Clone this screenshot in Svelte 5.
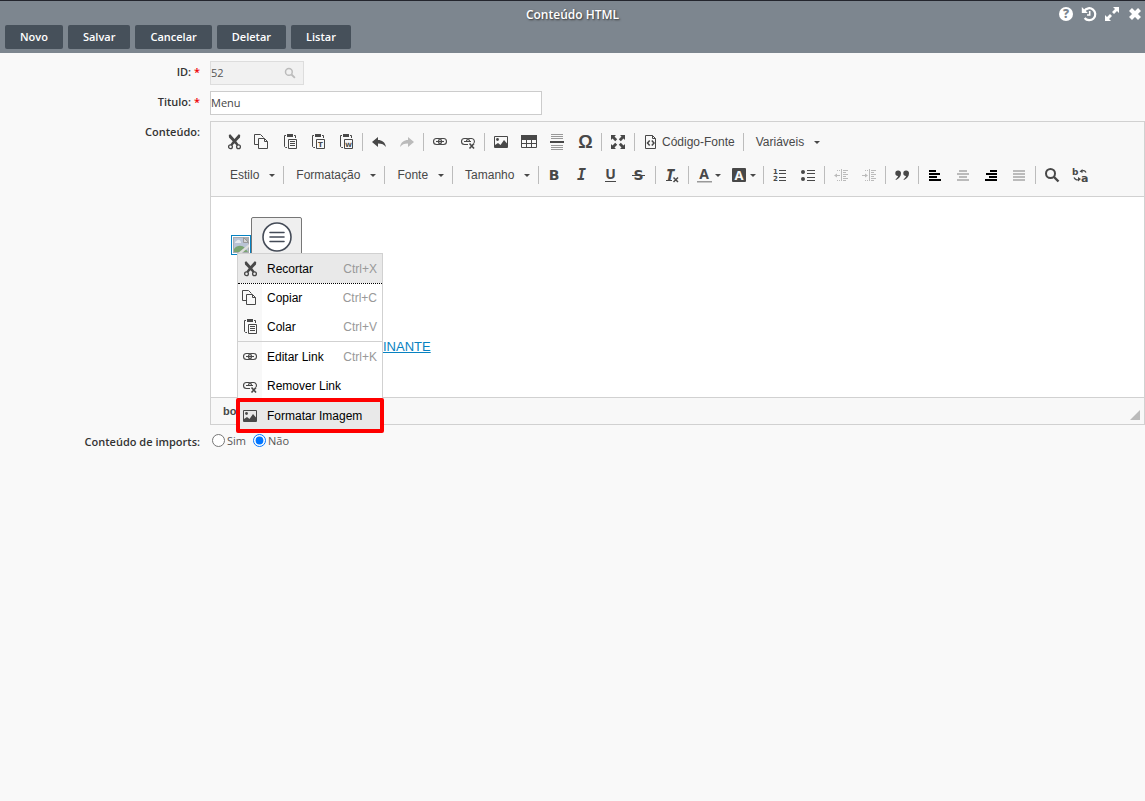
<script>
  const actions = ["Novo", "Salvar", "Cancelar", "Deletar", "Listar"];

  const windowTools = [
    { icon: "help", label: "Ajuda" },
    { icon: "history", label: "Histórico" },
    { icon: "expand", label: "Expandir" },
    { icon: "close", label: "Fechar" },
  ];

  // Inner markup of every 16x16 icon
  const icons = {
    help: `<circle cx="8" cy="8" r="7"/><text x="8" y="12.2" text-anchor="middle" font-family="Open Sans" font-weight="800" font-size="12" fill="#7d868f">?</text>`,
    history: `<path d="M3.2 5A6 6 0 1 1 3.6 12" fill="none" stroke="currentColor" stroke-width="2.2"/><path d="M.8 1v6h6z"/><path d="M8.7 5v4H6" fill="none" stroke="currentColor" stroke-width="1.6"/>`,
    expand: `<path d="M9 1h6v6l-2-2-3 3-2-2 3-3zM7 15H1V9l2 2 3-3 2 2-3 3z"/>`,
    close: `<path d="M3.5 3.5l9 9M12.5 3.5l-9 9" fill="none" stroke="currentColor" stroke-width="4.2"/>`,
    search: `<circle cx="6.5" cy="6.5" r="4.5" fill="none" stroke="currentColor" stroke-width="2"/><path d="M10 10l4.5 4.5" stroke="currentColor" stroke-width="2.4"/>`,
    cut: `<path d="M2.8 1L4.3.3 8.5 5 12.700.3l1.500.7-.2 2.500-3.700 3.800 2.400 3.200-1.800 1.200-2.400-2.400-2.400 2.400-1.800-1.200 2.400-3.200L3 3.500z"/><circle cx="4.500" cy="12.800" r="1.900" fill="none" stroke="currentColor" stroke-width="1.300"/><circle cx="12.500" cy="12.800" r="1.900" fill="none" stroke="currentColor" stroke-width="1.300"/>`,
    copy: `<g fill="none" stroke="currentColor"><path d="M4 10.5H.5V.5h6l3 3M4.500 4.500h6l3 3v7h-9zM10.500 4.500v3h3"/></g>`,
    clip: `<path d="M5 0h6v3H5z"/><g fill="none" stroke="currentColor"><path d="M4 1.500H2.500v11l1 1H5M12 1.500h1.500V4M6.500 5.500h8v9h-8z"/></g>`,
    paste: `<path d="M8 7.500h5M8 9.500h5M8 11.500h5" stroke="currentColor"/>`,
    pasteText: `<text x="10.5" y="13" text-anchor="middle" font-family="DejaVu Sans" font-weight="700" font-size="7">T</text>`,
    pasteWord: `<text x="10.5" y="13" text-anchor="middle" font-family="DejaVu Sans" font-weight="700" font-size="6">W</text>`,
    undo: `<path d="M1 8l6-5v3c4 0 7 2 8 7-2-2.5-4-3.500-8-3.500V13z"/>`,
    redo: `<path d="M15 8L9 3v3c-4 0-7 2-8 7 2-2.500 4-3.500 8-3.500V13z"/>`,
    link: `<g fill="none" stroke="currentColor" stroke-width="1.100"><rect x="1.500" y="4.500" width="8" height="6" rx="3"/><rect x="6.500" y="4.500" width="8" height="6" rx="3"/><path d="M4 7.500h8"/></g>`,
    unlink: `<g fill="none" stroke="currentColor" stroke-width="1.100"><path d="M8 10.500H4.500a3 3 0 0 1 0-6H7a3 3 0 0 1 2.500 3M6.500 7.500a3 3 0 0 1 2.500-3h2.500a3 3 0 0 1 2.500 4.500M4 7.500h7"/><path d="M9.500 9.500l4.500 5M14 9.500l-4.500 5" stroke-width="1.600"/></g>`,
    image: `<path d="M1.500 2.500h13v11h-13z" fill="none" stroke="currentColor"/><path d="M2 13v-2l3-2 2.500 2L11 6l3.500 4v3z"/><circle cx="4.500" cy="5.500" r="1.400"/>`,
    table: `<path d="M0 1h16v5H0z"/><path d="M.5 1.500h15v12H.5zM5.500 5v9M10.500 5v9M0 9.500h16" fill="none" stroke="currentColor"/>`,
    rule: `<path d="M2 .5h12M2 2.500h12M2 4.500h12M2 11.500h12M2 13.500h12M2 15.500h12" stroke="#999"/><path d="M1 7h14v2H1z"/>`,
    omega: `<text x="8.5" y="14" text-anchor="middle" font-family="Liberation Sans" font-weight="700" font-size="18">Ω</text>`,
    maximize: `<path d="M1 1h5L4.500 2.500l2.700 2.700-2 2-2.700-2.700L1 6zM15 1h-5l1.500 1.500-2.700 2.700 2 2 2.700-2.700L15 6zM1 15h5l-1.500-1.500 2.700-2.700-2-2-2.700 2.700L1 10zM15 15h-5l1.500-1.500-2.700-2.700 2-2 2.700 2.700L15 10z"/>`,
    source: `<path d="M2.500 1.500h7l3 3v10h-10zM9.500 1.500v3h3" fill="none" stroke="currentColor"/><path d="M6.700 6.500L4.500 9l2.200 2.500M8.800 6.500L11 9l-2.200 2.500" fill="none" stroke="currentColor" stroke-width="1.500"/>`,
    bold: `<text x="7" y="13" text-anchor="middle" font-family="DejaVu Sans" font-weight="700" font-size="14">B</text>`,
    italic: `<text x="6.500" y="13" text-anchor="middle" font-family="DejaVu Sans Mono" font-style="italic" font-weight="700" font-size="15">I</text>`,
    underline: `<text x="7.500" y="12" text-anchor="middle" font-family="Noto Sans" font-weight="700" font-size="14">U</text><path d="M2 14h11v1H2z"/>`,
    strike: `<text x="7.500" y="13" text-anchor="middle" font-family="DejaVu Sans" font-weight="700" font-size="14">S</text><path d="M1 8h13v1H1z"/>`,
    clear: `<text x="6" y="13" text-anchor="middle" font-family="Noto Sans" font-style="italic" font-weight="800" font-size="15">T</text><path d="M2 13.500h6" stroke="currentColor"/><path d="M9.500 10.500l4.500 4.500M14 10.500L9.500 15" stroke="currentColor" stroke-width="1.500"/>`,
    color: `<text x="8" y="12" text-anchor="middle" font-family="Noto Sans" font-weight="700" font-size="14">A</text><path d="M1 14h15v1.500H1z" fill="#999"/>`,
    background: `<rect x="1" y="1" width="14" height="14" rx="1"/><text x="8" y="12.700" text-anchor="middle" font-family="Noto Sans" font-weight="700" font-size="13" fill="#f8f8f8">A</text>`,
    numbered: `<g font-family="DejaVu Sans" font-weight="700" font-size="7"><text x="1" y="7">1</text><text x="1" y="14">2</text></g><path d="M7 3.500h7M7 6.500h7M7 10.500h7M7 13.500h7" stroke="currentColor"/>`,
    bulleted: `<circle cx="3" cy="5" r="2"/><circle cx="3" cy="12" r="2"/><path d="M7 3.500h8M7 6.500h8M7 10.500h8M7 13.500h8" stroke="currentColor"/>`,
    outdent: `<path d="M8.500 2v12M10 3.500h5M10 5.500h3M10 7.500h5M10 9.500h3M10 11.500h5M10 13.500h3M2 8.500h5M4 3.500h1M6 3.500h1M4 13.500h1M6 13.500h1" stroke="currentColor"/><path d="M1 8.500l3-2v4z"/>`,
    indent: `<path d="M8.500 2v12M10 3.500h5M10 5.500h3M10 7.500h5M10 9.500h3M10 11.500h5M10 13.500h3M1 8.500h5M4 3.500h1M6 3.500h1M4 13.500h1M6 13.500h1" stroke="currentColor"/><path d="M7 8.500l-3-2v4z"/>`,
    quote: `<path d="M4 3.500a2.700 2.700 0 0 1 3 3c0 3-2 5-5 6.500l-.5-.8C3 11 4 10 4 8.900a2.700 2.700 0 0 1 0-5.400zM12 3.500a2.700 2.700 0 0 1 3 3c0 3-2 5-5 6.500l-.5-.8c1.500-1.200 2.500-2.200 2.500-3.300a2.700 2.700 0 0 1 0-5.400z"/>`,
    left: `<path d="M2 3h7v2H2zM2 6h11v2H2zM2 9h8v2H2zM2 12h12v2H2z"/>`,
    center: `<path d="M4 3h8v2H4zM2 6h12v2H2zM4 9h8v2H4zM2 12h12v2H2z"/>`,
    right: `<path d="M7 3h7v2H7zM3 6h11v2H3zM6 9h8v2H6zM2 12h12v2H2z"/>`,
    justify: `<path d="M2 3h12v2H2zM2 6h12v2H2zM2 9h12v2H2zM2 12h12v2H2z"/>`,
    replace: `<g font-family="DejaVu Sans" font-weight="700"><text x="0" y="8" font-size="9">b</text><text x="9" y="15" font-size="11">a</text></g><path d="M9 4.500c2-1.500 4-1 5 1M7 12.500c-2 1-4 0-5-2" fill="none" stroke="currentColor" stroke-width="1.300"/><path d="M7.500 4.500l3-2.500v4zM9 12l-3-2v4.500z"/>`,
  };
  icons.paste = icons.clip + icons.paste;
  icons.pasteText = icons.clip + icons.pasteText;
  icons.pasteWord = icons.clip + icons.pasteWord;

  const rows = [
    [
      [
        { icon: "cut", label: "Recortar" },
        { icon: "copy", label: "Copiar" },
        { icon: "paste", label: "Colar" },
        { icon: "pasteText", label: "Colar como texto" },
        { icon: "pasteWord", label: "Colar do Word" },
      ],
      [
        { icon: "undo", label: "Desfazer" },
        { icon: "redo", label: "Refazer", off: true },
      ],
      [
        { icon: "link", label: "Link" },
        { icon: "unlink", label: "Remover Link" },
      ],
      [
        { icon: "image", label: "Imagem" },
        { icon: "table", label: "Tabela" },
        { icon: "rule", label: "Linha Horizontal" },
        { icon: "omega", label: "Caractere Especial" },
      ],
      [{ icon: "maximize", label: "Maximizar" }],
      [{ icon: "source", text: "Código-Fonte" }],
      [{ combo: "Variáveis" }],
    ],
    [
      [{ combo: "Estilo" }],
      [{ combo: "Formatação" }],
      [{ combo: "Fonte" }],
      [{ combo: "Tamanho" }],
      [
        { icon: "bold", label: "Negrito" },
        { icon: "italic", label: "Itálico" },
        { icon: "underline", label: "Sublinhado" },
        { icon: "strike", label: "Tachado" },
      ],
      [{ icon: "clear", label: "Remover Formatação" }],
      [
        { icon: "color", label: "Cor do Texto", arrow: true },
        { icon: "background", label: "Cor do Plano de Fundo", arrow: true },
      ],
      [
        { icon: "numbered", label: "Lista numerada" },
        { icon: "bulleted", label: "Lista sem números" },
      ],
      [
        { icon: "outdent", label: "Diminuir Recuo", off: true },
        { icon: "indent", label: "Aumentar Recuo", off: true },
      ],
      [{ icon: "quote", label: "Citação" }],
      [
        { icon: "left", label: "Alinhar Esquerda", dark: true },
        { icon: "center", label: "Centralizar", off: true },
        { icon: "right", label: "Alinhar Direita", dark: true },
        { icon: "justify", label: "Justificado", off: true },
      ],
      [
        { icon: "search", label: "Localizar" },
        { icon: "replace", label: "Substituir" },
      ],
    ],
  ];

  const menu = [
    [
      { icon: "cut", text: "Recortar", key: "Ctrl+X", active: true },
      { icon: "copy", text: "Copiar", key: "Ctrl+C", focusLine: true },
      { icon: "paste", text: "Colar", key: "Ctrl+V" },
    ],
    [
      { icon: "link", text: "Editar Link", key: "Ctrl+K" },
      { icon: "unlink", text: "Remover Link" },
    ],
    [{ icon: "image", text: "Formatar Imagem", active: true, marked: true }],
  ];

  let id = $state("52");
  let title = $state("Menu");
  let imports = $state("nao");
</script>

{#snippet icon(name)}
  <svg class="icon" viewBox="0 0 16 16" aria-hidden="true">
    {@html icons[name]}
  </svg>
{/snippet}

<header class="header">
  <h1 class="header__title">Conteúdo HTML</h1>
  <div class="header__tools">
    {#each windowTools as tool}
      <button class="header__tool" type="button" aria-label={tool.label}>
        {@render icon(tool.icon)}
      </button>
    {/each}
  </div>
  <nav class="header__actions">
    {#each actions as action}
      <button class="action" type="button">{action}</button>
    {/each}
  </nav>
</header>

<form class="form">
  <label class="label" for="id">ID: <span class="required">*</span></label>
  <div class="lookup">
    <input class="lookup__input" id="id" type="text" bind:value={id} readonly />
    {@render icon("search")}
  </div>

  <label class="label" for="title">Titulo: <span class="required">*</span></label>
  <input class="input" id="title" type="text" bind:value={title} />

  <span class="label">Conteúdo:</span>
  <div class="editor">
    <div class="toolbar">
      {#each rows as row}
        <div class="toolbar__row">
          {#each row as group, i}
            {#if i > 0}
              <span class="toolbar__sep"></span>
            {/if}
            {#each group as item}
              {#if item.combo}
                <button class="combo" type="button">
                  {item.combo}<span class="arrow"></span>
                </button>
              {:else}
                <button
                  class="tool"
                  class:tool--off={item.off}
                  class:tool--dark={item.dark}
                  class:tool--arrow={item.arrow}
                  class:tool--text={item.text}
                  type="button"
                  aria-label={item.label}
                >
                  {@render icon(item.icon)}
                  {#if item.text}<span>{item.text}</span>{/if}
                  {#if item.arrow}<span class="arrow"></span>{/if}
                </button>
              {/if}
            {/each}
          {/each}
        </div>
      {/each}
    </div>

    <div class="content">
      <div class="content__images">
        <svg class="broken" viewBox="0 0 20 20" role="img" aria-label="Imagem">
          <rect x=".5" y=".5" width="19" height="19" fill="#fff" stroke="#0782c1" />
          <path d="M2 2h16v16H2z" fill="#a9acb0" />
          <path d="M3 3h10v4h4v10H3z" fill="#b9c3d4" />
          <path d="M4 8c0-2 2-2 2.500-3 2-1 3.500 1 3.500 3z" fill="#e4e8ee" />
          <path d="M3 17v-3c3-4 8-4 11-1l3 4z" fill="#7ba471" />
          <path d="M18 9v3l-7 6H7z" fill="#ddd" />
          <path d="M12.500 2.500l5 5h-5z" fill="#d6d6d6" stroke="#999" />
        </svg>
        <button class="burger" type="button" aria-label="Menu">
          <svg class="burger__icon" viewBox="0 0 30 30">
            <circle cx="15" cy="15" r="14" fill="#fff" stroke="#444b57" stroke-width="1.6" />
            <path d="M8 10.500h14M8 15h14M8 19.500h14" stroke="#444b57" stroke-width="1.6" stroke-linecap="round" />
          </svg>
        </button>
      </div>
      <a class="content__link" href="#assinante">INANTE</a>

      <div class="menu" role="menu">
        {#each menu as group}
          <div class="menu__group">
            {#each group as item}
              <button
                class="menu__item"
                class:menu__item--active={item.active}
                class:menu__item--line={item.focusLine}
                class:menu__item--marked={item.marked}
                type="button"
                role="menuitem"
              >
                <span class="menu__icon">{@render icon(item.icon)}</span>
                <span class="menu__text">{item.text}</span>
                {#if item.key}<span class="menu__key">{item.key}</span>{/if}
              </button>
            {/each}
          </div>
        {/each}
      </div>
    </div>

    <div class="status">
      <span>body</span>
      <span class="status__resize"></span>
    </div>
  </div>

  <span class="label" id="imports">Conteúdo de imports:</span>
  <div class="radios" role="radiogroup" aria-labelledby="imports">
    <label class="radio">
      <input type="radio" name="imports" value="sim" bind:group={imports} />Sim
    </label>
    <label class="radio">
      <input type="radio" name="imports" value="nao" bind:group={imports} />Não
    </label>
  </div>
</form>

<style>
  :global(body) {
    margin: 0;
    background: #f9f9f9;
    color: #333;
    font-family: "Open Sans", sans-serif;
    font-size: 11px;
  }

  button,
  input {
    box-sizing: border-box;
    font: inherit;
  }

  button {
    border: none;
    background: none;
    padding: 0;
    color: inherit;
    cursor: pointer;
  }

  .icon {
    width: 16px;
    height: 16px;
    flex: none;
    fill: currentColor;
    overflow: visible;
  }

  .header {
    display: grid;
    grid-template-columns: 1fr auto 1fr;
    row-gap: 1px;
    border-top: 1px solid #23252d;
    padding-bottom: 4px;
    background: #7d868f;
    color: #fff;
  }

  .header__title {
    grid-column: 2;
    margin: 0;
    padding-top: 5px;
    font-size: 12px;
    font-weight: 600;
    line-height: 18px;
    text-shadow: 1px 1px 2px #333;
  }

  .header__tools {
    display: flex;
    justify-content: flex-end;
    gap: 7px;
    padding: 5px 2px 0 0;
  }

  .header__tool {
    display: flex;
    height: 16px;
  }

  .header__actions {
    grid-column: 1 / -1;
    display: flex;
    gap: 5px;
    padding-left: 5px;
  }

  .action {
    height: 24px;
    border-radius: 2px;
    padding: 0 15px 2px;
    background: #46505a;
    font-weight: 600;
  }

  .form {
    display: grid;
    grid-template-columns: 200px minmax(0, 1fr);
    gap: 6px 10px;
    padding-top: 8px;
  }

  .label {
    font-weight: 600;
    line-height: 22px;
    text-align: right;
  }

  .required {
    color: #e00;
  }

  .input {
    width: 332px;
    height: 24px;
    border: 1px solid #ccc;
    padding: 0 0 2px;
    background: #fff;
    color: #444;
  }

  .lookup {
    display: flex;
    align-items: center;
    box-sizing: border-box;
    width: 94px;
    height: 24px;
    border: 1px solid #ddd;
    padding-right: 7px;
    background: #f1f1f1;
    color: #bbb;
  }

  .lookup__input {
    flex: 1;
    min-width: 0;
    border: none;
    padding: 0 0 2px;
    background: none;
    color: #555;
  }

  .lookup .icon {
    width: 12px;
    height: 12px;
  }

  .editor {
    border: 1px solid #d1d1d1;
    color: #484848;
    font-family: "Liberation Sans", Arial, sans-serif;
    font-size: 12px;
  }

  .toolbar {
    display: flex;
    flex-direction: column;
    gap: 5px;
    border-bottom: 1px solid #d1d1d1;
    padding: 6px 9px 7px;
    background: #f8f8f8;
  }

  .toolbar__row {
    display: flex;
    align-items: center;
    height: 28px;
  }

  .toolbar__sep {
    width: 1px;
    height: 18px;
    margin: 0 2px;
    background: #bcbcbc;
  }

  .tool {
    display: flex;
    align-items: center;
    padding: 6px;
  }

  .tool--off {
    color: #bbb;
  }

  .tool--dark {
    color: #000;
  }

  .tool--arrow {
    gap: 3px;
    padding: 6px 5px;
  }

  .tool--text {
    gap: 3px;
  }

  .combo {
    display: flex;
    align-items: center;
    gap: 10px;
    padding: 0 6px 0 10px;
  }

  .arrow {
    border: 3px solid transparent;
    border-top-color: #484848;
    border-bottom: none;
  }

  .content {
    position: relative;
    box-sizing: border-box;
    height: 200px;
    padding: 20px;
    background: #fff;
    font-size: 13px;
  }

  .content__images {
    display: flex;
    align-items: flex-end;
    margin-bottom: 84px;
  }

  .broken {
    width: 20px;
    height: 20px;
  }

  .burger {
    display: flex;
    justify-content: center;
    width: 51px;
    height: 38px;
    border: 1px solid #767676;
    border-radius: 2px;
    padding-top: 4px;
    background: #efefef;
  }

  .burger__icon {
    width: 30px;
    height: 30px;
  }

  .content__link {
    margin-left: 152px;
    color: #0782c1;
    line-height: 16px;
  }

  .menu {
    position: absolute;
    top: 56px;
    left: 26px;
    z-index: 1;
    width: 144px;
    border: 1px solid #d1d1d1;
    background: #fff;
    color: #000;
    font-size: 12px;
  }

  .menu__group + .menu__group {
    border-top: 1px solid #d1d1d1;
  }

  .menu__item {
    position: relative;
    display: flex;
    align-items: center;
    width: 100%;
    height: 29px;
    padding-right: 5px;
  }

  .menu__item--line {
    border-top: 1px dotted #000;
  }

  .menu__icon {
    display: flex;
    align-items: center;
    align-self: stretch;
    width: 20px;
    padding-left: 4px;
    background: #f8f8f8;
    color: #484848;
  }

  .menu__item--active,
  .menu__item--active .menu__icon {
    background: #e9e9e9;
  }

  .menu__item--marked::after {
    content: "";
    position: absolute;
    inset: -3px -2px;
    border: 4px solid #f00;
    border-radius: 2px;
  }

  .menu__text {
    padding-left: 5px;
    white-space: nowrap;
  }

  .menu__key {
    margin-left: auto;
    color: #999;
  }

  .status {
    display: flex;
    justify-content: space-between;
    align-items: center;
    height: 26px;
    border-top: 1px solid #d1d1d1;
    padding: 0 4px 0 12px;
    background: #f8f8f8;
    font-size: 11px;
    font-weight: 700;
  }

  .status__resize {
    align-self: flex-end;
    margin-bottom: 4px;
    border: 5px solid #bbb;
    border-top-color: transparent;
    border-left-color: transparent;
  }

  .radios {
    display: flex;
    gap: 7px;
    padding-left: 2px;
  }

  .radio {
    display: flex;
    align-items: center;
    gap: 2px;
    height: 19px;
    color: #555;
  }

  .radio input {
    width: 13px;
    height: 13px;
    margin: 0;
  }
</style>
